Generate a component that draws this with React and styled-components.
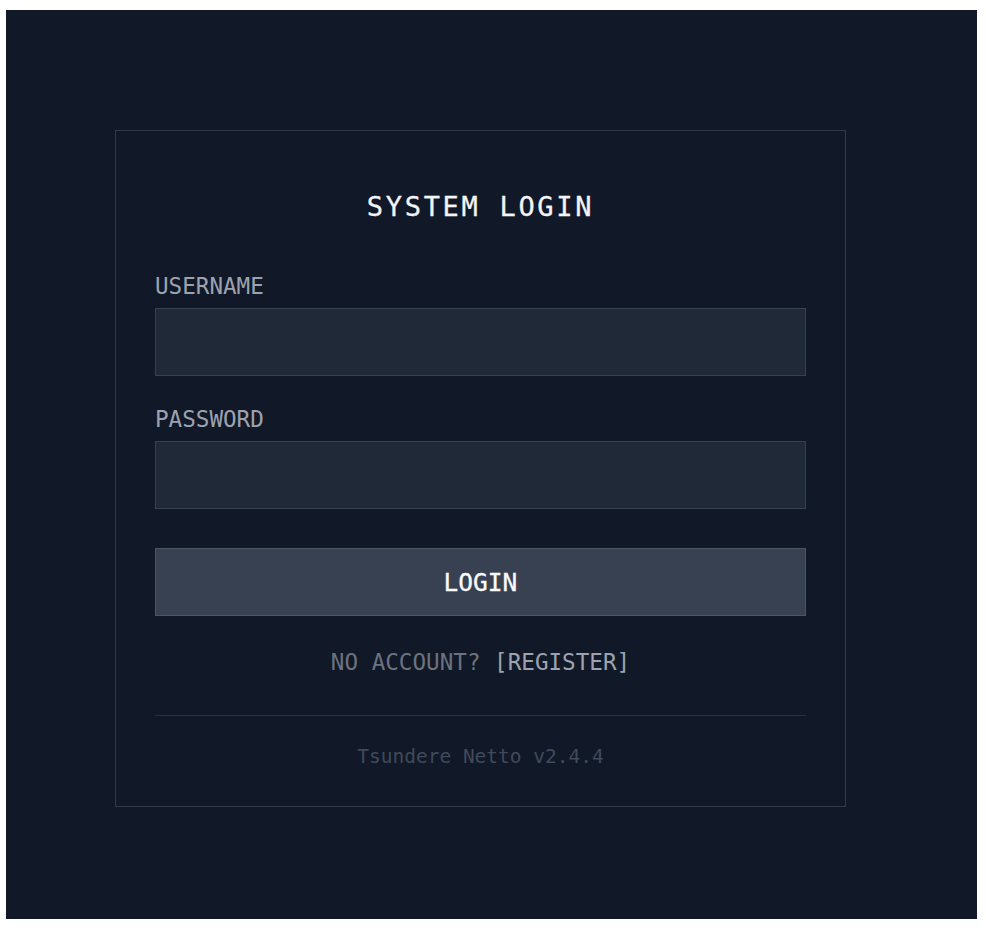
import React from "react";
import styled, { createGlobalStyle } from "styled-components";

const GlobalStyle = createGlobalStyle`
  *, *::before, *::after { box-sizing: border-box; }
  html, body { background: #ffffff; }
  body {
    margin: 10px 0 0 6px;
    font-family: "DejaVu Sans Mono", "Liberation Mono", monospace;
  }
`;

const Screen = styled.main`
  width: 971px;
  height: 909px;
  background: #111827;
  padding: 120px 131px 0 109px;
`;

const Card = styled.form`
  width: 731px;
  border: 1px solid #2f3a4b;
  padding: 60px 39px 37px;
  display: flex;
  flex-direction: column;
`;

const Title = styled.h1`
  margin: 0;
  font-size: 27px;
  line-height: 32px;
  font-weight: 400;
  letter-spacing: 2.7px;
  color: #f3f4f6;
  text-align: center;
  -webkit-text-stroke: 0.3px #f3f4f6;
`;

const Field = styled.div`
  display: flex;
  flex-direction: column;
  margin-top: ${(p) => p.$top}px;
`;

const Label = styled.label`
  font-size: 22.6px;
  line-height: 26px;
  color: #9ca3af;
  margin-bottom: 9px;
`;

const Input = styled.input`
  height: 68px;
  width: 100%;
  background: #1f2937;
  border: 1px solid #374151;
  border-radius: 0;
  color: #e5e7eb;
  font: inherit;
  font-size: 20px;
  padding: 0 16px;
  outline: none;
`;

const Button = styled.button`
  margin-top: 39px;
  height: 68px;
  width: 100%;
  background: #374151;
  border: 1px solid #4b5563;
  border-radius: 0;
  color: #f9fafb;
  font-family: inherit;
  font-size: 24.5px;
  font-weight: 400;
  -webkit-text-stroke: 0.3px #f9fafb;
  cursor: pointer;
`;

const Prompt = styled.p`
  margin: 33px 0 0;
  font-size: 22.6px;
  line-height: 26px;
  text-align: center;
  color: #6b7280;
`;

const RegisterLink = styled.a`
  color: #9ca3af;
  text-decoration: none;
  cursor: pointer;
`;

const Divider = styled.hr`
  margin: 40px 0 0;
  border: 0;
  height: 1px;
  background: #263041;
`;

const Version = styled.div`
  margin-top: 29px;
  font-size: 19.5px;
  line-height: 24px;
  text-align: center;
  color: #3f4a5c;
`;

export default function App() {
  return (
    <>
      <GlobalStyle />
      <Screen>
        <Card onSubmit={(e) => e.preventDefault()}>
          <Title>SYSTEM LOGIN</Title>
          <Field $top={50}>
            <Label htmlFor="username">USERNAME</Label>
            <Input id="username" type="text" />
          </Field>
          <Field $top={30}>
            <Label htmlFor="password">PASSWORD</Label>
            <Input id="password" type="password" />
          </Field>
          <Button type="submit">LOGIN</Button>
          <Prompt>
            NO ACCOUNT? <RegisterLink>[REGISTER]</RegisterLink>
          </Prompt>
          <Divider />
          <Version>Tsundere Netto v2.4.4</Version>
        </Card>
      </Screen>
    </>
  );
}
